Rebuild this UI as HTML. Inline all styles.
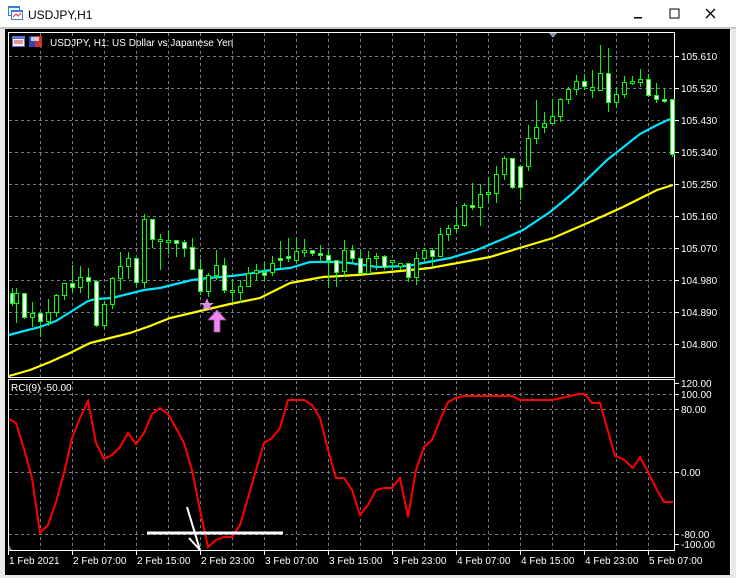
<!DOCTYPE html>
<html><head><meta charset="utf-8"><style>
html,body{margin:0;padding:0;background:#fff;width:736px;height:578px;overflow:hidden}
svg{display:block}
text{font-family:"Liberation Sans",sans-serif;font-size:10px}
</style></head><body>
<svg width="736" height="578" xmlns="http://www.w3.org/2000/svg" shape-rendering="crispEdges">
<rect x="0" y="0" width="736" height="578" fill="#fff"/>
<!-- title bar -->
<rect x="8" y="6" width="12" height="10" fill="#3a7bd5"/><rect x="9" y="8" width="10" height="7" fill="#dff"/>
<rect x="11" y="10" width="12" height="10" fill="#3a7bd5"/><rect x="12" y="12" width="10" height="7" fill="#fff"/>
<path d="M13 17 L16 14 L18 16 L21 13" stroke="#e33" fill="none" shape-rendering="auto"/>
<text x="28" y="19" font-size="12" fill="#000" style="font-size:12px">USDJPY,H1</text>
<rect x="634" y="17" width="8" height="1.5" fill="#000"/>
<rect x="670" y="9" width="9" height="9" fill="none" stroke="#000"/>
<path d="M706 9 L715 18 M715 9 L706 18" stroke="#000" stroke-width="1.3" shape-rendering="auto"/>
<rect x="0" y="27" width="736" height="2" fill="#c8c8c8"/>
<rect x="731" y="29" width="5" height="549" fill="#e8e8e8"/>
<rect x="0" y="575" width="736" height="3" fill="#e8e8e8"/>
<rect x="0" y="29" width="5" height="549" fill="#e8e8e8"/>
<!-- black chart -->
<rect x="5" y="29" width="725" height="546" fill="#000"/>
<!-- grid -->
<g stroke="#6e7c8c" stroke-dasharray="3,3" stroke-width="1">
<path d="M40.5 33V377M72.5 33V377M104.5 33V377M136.5 33V377M168.5 33V377M200.5 33V377M232.5 33V377M264.5 33V377M296.5 33V377M328.5 33V377M360.5 33V377M392.5 33V377M424.5 33V377M456.5 33V377M488.5 33V377M520.5 33V377M552.5 33V377M584.5 33V377M616.5 33V377M648.5 33V377"/>
<path d="M40.5 381V550M72.5 381V550M104.5 381V550M136.5 381V550M168.5 381V550M200.5 381V550M232.5 381V550M264.5 381V550M296.5 381V550M328.5 381V550M360.5 381V550M392.5 381V550M424.5 381V550M456.5 381V550M488.5 381V550M520.5 381V550M552.5 381V550M584.5 381V550M616.5 381V550M648.5 381V550"/>
<path d="M9 56.5H674M9 88.5H674M9 120.5H674M9 152.5H674M9 184.5H674M9 216.5H674M9 248.5H674M9 280.5H674M9 312.5H674M9 344.5H674"/>
<path d="M9 394.5H674M9 409.5H674M9 472.5H674M9 534.5H674"/>
</g>
<!-- frames -->
<g fill="none" stroke="#fff">
<rect x="8.5" y="32.5" width="666" height="345"/>
<rect x="8.5" y="379.5" width="666" height="171"/>
</g>
<g stroke="#fff">
<path d="M675 56.5h4M675 88.5h4M675 120.5h4M675 152.5h4M675 184.5h4M675 216.5h4M675 248.5h4M675 280.5h4M675 312.5h4M675 344.5h4"/>
<path d="M675 383.5h4M675 394.5h4M675 409.5h4M675 472.5h4M675 534.5h4M675 544.5h4"/>
<path d="M8.5 551v4M72.5 551v4M136.5 551v4M200.5 551v4M264.5 551v4M328.5 551v4M392.5 551v4M456.5 551v4M520.5 551v4M584.5 551v4M648.5 551v4"/>
</g>
<path d="M549 33h8l-4 5z" fill="#8898a8"/>
<g fill="#fff">
<text x="681" y="60">105.610</text><text x="681" y="92">105.520</text><text x="681" y="124">105.430</text><text x="681" y="156">105.340</text><text x="681" y="188">105.250</text><text x="681" y="220">105.160</text><text x="681" y="252">105.070</text><text x="681" y="284">104.980</text><text x="681" y="316">104.890</text><text x="681" y="348">104.800</text>
<text x="681" y="387">120.00</text><text x="681" y="398">100.00</text><text x="681" y="413">80.00</text><text x="681" y="476">0.00</text><text x="681" y="538">-80.00</text><text x="681" y="548">-100.00</text>
<text x="9" y="564">1 Feb 2021</text><text x="73" y="564">2 Feb 07:00</text><text x="137" y="564">2 Feb 15:00</text><text x="201" y="564">2 Feb 23:00</text><text x="265" y="564">3 Feb 07:00</text><text x="329" y="564">3 Feb 15:00</text><text x="393" y="564">3 Feb 23:00</text><text x="457" y="564">4 Feb 07:00</text><text x="521" y="564">4 Feb 15:00</text><text x="585" y="564">4 Feb 23:00</text><text x="649" y="564">5 Feb 07:00</text>
<text x="50" y="46">USDJPY, H1:  US Dollar vs Japanese Yen</text>
<text x="11" y="391">RCI(9) -50.00</text>
</g>
<!-- header icons -->
<rect x="12" y="36" width="13" height="11" fill="#5b6fd6"/><rect x="13" y="39" width="11" height="7" fill="#f4f4f4"/><path d="M14 41h9M14 43h9" stroke="#d33"/>
<rect x="29" y="36" width="6" height="11" fill="#3344bb"/><rect x="35" y="36" width="7" height="11" fill="#c33"/><rect x="31" y="37" width="8" height="4" fill="#ccc"/>
<!-- MAs -->
<g fill="none" stroke-width="2.2" shape-rendering="auto">
<polyline stroke="#ffff00" points="9,376 30,370 50,362 70,353 90,343 110,338 130,333 150,326 170,318 200,311 230,304 260,298 290,283 323,277 357,275 390,272 430,268 463,262 490,257 523,247 553,238 590,222 623,207 657,190 673,185"/>
<polyline stroke="#00e5ff" points="9,335 24,331 40,327 56,321 72,311 88,301 96,299 112,298 128,294 144,290 160,288 176,284 192,280 208,278 232,276 248,274 264,271 280,269 290,268 310,262 333,262 350,263 377,267 407,266 423,263 450,258 477,250 503,239 523,230 550,212 573,193 607,160 640,134 657,125 670,119 674,120"/>
</g>
<!-- wicks -->
<path stroke="#00ff00" fill="none" d="M12.5 288V306M16.5 288V323M24.5 293V319M32.5 302V327M40.5 313V337M48.5 299V326M56.5 294V317M64.5 283V300M72.5 265V292M80.5 266V293M88.5 268V299M96.5 280V327M104.5 301V329M112.5 277V309M120.5 252V290M128.5 252V279M136.5 258V285M144.5 214V288M152.5 219V248M160.5 234V270M168.5 230V254M176.5 240V257M184.5 240V257M192.5 238V270M200.5 259V295M208.5 273V297M216.5 250V280M224.5 258V293M232.5 279V303M240.5 280V303M248.5 267V287M256.5 264V280M264.5 262V281M272.5 256V276M280.5 241V268M288.5 238V262M296.5 237V263M304.5 239V257M312.5 250V256M320.5 245V263M328.5 250V287M336.5 260V287M344.5 240V277M352.5 245V263M360.5 250V273M368.5 251V273M376.5 253V270M384.5 255V270M392.5 260V270M400.5 263V270M408.5 263V282M416.5 252V285M424.5 248V263M432.5 248V267M440.5 228V257M448.5 225V241M456.5 207V233M464.5 203V227M472.5 183V210M480.5 184V226M488.5 177V203M496.5 166V203M504.5 156V180M512.5 158V189M520.5 165V200M528.5 125V171M536.5 100V144M544.5 112V133M552.5 99V124M560.5 98V122M568.5 87V104M576.5 75V95M584.5 74V90M592.5 70V98M600.5 45V91M608.5 48V112M616.5 87V108M624.5 76V98M632.5 76V85M640.5 69V87M648.5 74V97M656.5 83V103M664.5 89V103M672.5 99V157"/>
<!-- bodies -->
<g stroke="#00ff00">
<g fill="#fff">
<rect x="10.5" y="293.5" width="3" height="10"/><rect x="22.5" y="293.5" width="4" height="24"/><rect x="38.5" y="313.5" width="4" height="8"/><rect x="70.5" y="283.5" width="4" height="4"/><rect x="86.5" y="277.5" width="4" height="4"/><rect x="94.5" y="281.5" width="4" height="44"/><rect x="134.5" y="258.5" width="4" height="24"/><rect x="150.5" y="219.5" width="4" height="20"/><rect x="174.5" y="240.5" width="4" height="3"/><rect x="182.5" y="242.5" width="4" height="6"/><rect x="190.5" y="247.5" width="4" height="22"/><rect x="198.5" y="269.5" width="4" height="22"/><rect x="222.5" y="265.5" width="4" height="25"/><rect x="262.5" y="272.5" width="4" height="3"/><rect x="278.5" y="258.5" width="4" height="2"/><rect x="286.5" y="256.5" width="4" height="2"/><rect x="310.5" y="250.5" width="4" height="3"/><rect x="318.5" y="253.5" width="4" height="2"/><rect x="326.5" y="255.5" width="4" height="5"/><rect x="334.5" y="260.5" width="4" height="12"/><rect x="350.5" y="250.5" width="4" height="8"/><rect x="358.5" y="258.5" width="4" height="15"/><rect x="382.5" y="256.5" width="4" height="11"/><rect x="406.5" y="263.5" width="4" height="14"/><rect x="430.5" y="250.5" width="4" height="6"/><rect x="470.5" y="205.5" width="4" height="2"/><rect x="510.5" y="158.5" width="4" height="29"/><rect x="518.5" y="166.5" width="4" height="21"/><rect x="582.5" y="81.5" width="4" height="5"/><rect x="606.5" y="73.5" width="4" height="29"/><rect x="646.5" y="79.5" width="4" height="16"/><rect x="654.5" y="95.5" width="4" height="4"/><rect x="662.5" y="99.5" width="4" height="2"/><rect x="670.5" y="99.5" width="4" height="55"/>
</g>
<g fill="#000">
<rect x="14.5" y="293.5" width="4" height="10"/><rect x="30.5" y="313.5" width="4" height="4"/><rect x="46.5" y="312.5" width="4" height="9"/><rect x="54.5" y="295.5" width="4" height="17"/><rect x="62.5" y="283.5" width="4" height="12"/><rect x="78.5" y="277.5" width="4" height="10"/><rect x="102.5" y="304.5" width="4" height="21"/><rect x="110.5" y="278.5" width="4" height="26"/><rect x="118.5" y="266.5" width="4" height="12"/><rect x="126.5" y="258.5" width="4" height="8"/><rect x="142.5" y="219.5" width="4" height="63"/><rect x="158.5" y="239.5" width="4" height="2"/><rect x="166.5" y="240.5" width="4" height="2"/><rect x="206.5" y="275.5" width="4" height="16"/><rect x="214.5" y="265.5" width="4" height="10"/><rect x="230.5" y="290.5" width="4" height="2"/><rect x="238.5" y="286.5" width="4" height="6"/><rect x="246.5" y="273.5" width="4" height="13"/><rect x="254.5" y="270.5" width="4" height="3"/><rect x="270.5" y="263.5" width="4" height="9"/><rect x="294.5" y="251.5" width="4" height="9"/><rect x="302.5" y="250.5" width="4" height="2"/><rect x="342.5" y="250.5" width="4" height="21"/><rect x="366.5" y="258.5" width="4" height="15"/><rect x="374.5" y="256.5" width="4" height="2"/><rect x="390.5" y="260.5" width="4" height="2"/><rect x="398.5" y="263.5" width="4" height="3"/><rect x="414.5" y="258.5" width="4" height="19"/><rect x="422.5" y="250.5" width="4" height="8"/><rect x="438.5" y="234.5" width="4" height="22"/><rect x="446.5" y="228.5" width="4" height="6"/><rect x="454.5" y="225.5" width="4" height="3"/><rect x="462.5" y="205.5" width="4" height="20"/><rect x="478.5" y="194.5" width="4" height="13"/><rect x="486.5" y="192.5" width="4" height="2"/><rect x="494.5" y="174.5" width="4" height="19"/><rect x="502.5" y="158.5" width="4" height="16"/><rect x="526.5" y="138.5" width="4" height="28"/><rect x="534.5" y="127.5" width="4" height="11"/><rect x="542.5" y="123.5" width="4" height="4"/><rect x="550.5" y="116.5" width="4" height="7"/><rect x="558.5" y="99.5" width="4" height="17"/><rect x="566.5" y="89.5" width="4" height="10"/><rect x="574.5" y="81.5" width="4" height="8"/><rect x="590.5" y="87.5" width="4" height="3"/><rect x="598.5" y="73.5" width="4" height="17"/><rect x="614.5" y="94.5" width="4" height="8"/><rect x="622.5" y="82.5" width="4" height="12"/><rect x="630.5" y="81.5" width="4" height="2"/><rect x="638.5" y="79.5" width="4" height="3"/>
</g>
</g>
<!-- star and arrow -->
<path d="M207 298 L209 303 L214 303 L210 306 L212 311 L207 308 L202 311 L204 306 L200 303 L205 303Z" fill="#e08ae8" shape-rendering="auto"/>
<path d="M217 310 L226 320 L220 320 L220 332 L214 332 L214 320 L208 320Z" fill="#ee88ee" stroke="#9a4aa8" stroke-width="0.8" shape-rendering="auto"/>
<!-- RCI -->
<polyline fill="none" stroke="#ff0000" stroke-width="2" shape-rendering="auto" points="9,419 16,423 24,449 32,478 40,533 48,525 56,502 64,473 72,438 80,418 88,401 96,443 104,459 112,455 120,447 128,433 136,444 144,433 152,414 160,408 168,414 176,428 184,443 192,470 200,510 208,547 216,540 224,537 232,537 240,525 248,498 256,470 264,443 272,438 280,428 288,400 296,400 304,400 312,405 320,418 328,450 336,478 344,478 352,490 360,515 368,505 376,490 384,488 392,488 400,478 408,517 416,470 424,447 432,440 440,420 448,402 456,398 464,396 480,396 496,396 512,396 520,400 536,400 552,400 570,396 580,394 585,394 592,403 600,403 615,456 623,459 633,468 640,457 648,472 657,490 664,502 673,502"/>
<!-- annotations -->
<path d="M147 533H283" stroke="#fff" stroke-width="3"/>
<path d="M187 507 L200 550 M189 538 L200 550" stroke="#fff" stroke-width="2" shape-rendering="auto" fill="none"/>
<path d="M9 545 L12 550 L9 550Z" fill="#6e7c8c"/>
</svg>
</body></html>
